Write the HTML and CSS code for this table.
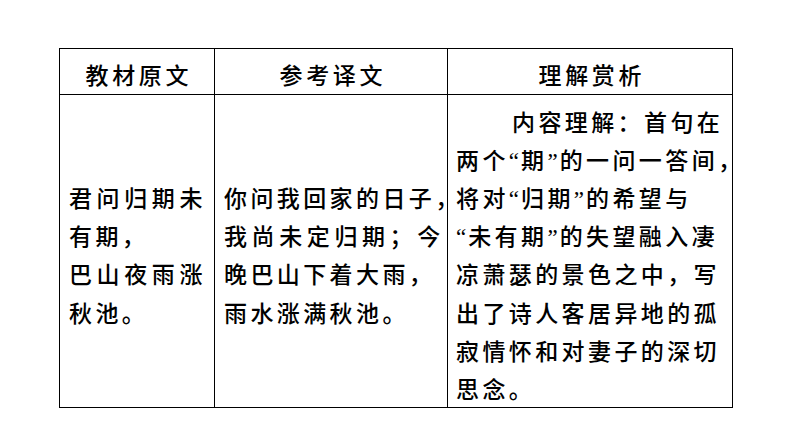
FILE: index.html
```html
<!DOCTYPE html>
<html lang="zh-CN">
<head>
<meta charset="utf-8">
<title>夜雨寄北</title>
<link rel="stylesheet" href="styles.css">
</head>
<body>
<div class="page">
  <div class="grid">
    <div class="cell head">教材原文</div>
    <div class="cell head">参考译文</div>
    <div class="cell head">理解赏析</div>

    <div class="cell body c1">
      <div class="line wide">君问归期未</div>
      <div class="line">有期，</div>
      <div class="line wide">巴山夜雨涨</div>
      <div class="line">秋池。</div>
    </div>
    <div class="cell body c2">
      <div class="line">你问我回家的日子<span class="tight">，</span></div>
      <div class="line wide">我尚未定归期；今</div>
      <div class="line">晚巴山下着大雨，</div>
      <div class="line">雨水涨满秋池。</div>
    </div>
    <div class="cell body c3">
      <div class="line indent">内容理解：首句在</div>
      <div class="line">两个<span class="q">“</span>期<span class="q">”</span>的一问一答间<span class="tight">，</span></div>
      <div class="line">将对<span class="q">“</span>归期<span class="q">”</span>的希望与</div>
      <div class="line"><span class="q">“</span>未有期<span class="q">”</span>的失望融入凄</div>
      <div class="line">凉萧瑟的景色之中，写</div>
      <div class="line">出了诗人客居异地的孤</div>
      <div class="line">寂情怀和对妻子的深切</div>
      <div class="line">思念。</div>
    </div>
  </div>
</div>
</body>
</html>
```

FILE: styles.css
```css
html, body {
  margin: 0;
  padding: 0;
  background: #ffffff;
}

.page {
  padding: 48px 0 0 59px;
  font-family: "Noto Sans CJK SC", "Noto Sans CJK TC", sans-serif;
  font-size: 23px;
  font-weight: 500;
  color: #000000;
}

.grid {
  display: grid;
  grid-template-columns: 155px 233px 285px;
  grid-template-rows: 46px 313px;
  width: 673px;
  border-left: 1px solid #000;
  border-top: 1px solid #000;
}

.cell {
  box-sizing: border-box;
  border-right: 1px solid #000;
  border-bottom: 1px solid #000;
}

.head {
  text-align: center;
  line-height: 45px;
  padding-top: 3px;
  letter-spacing: 3.6px;
  text-indent: 3.6px;
}

.body {
  letter-spacing: 3.4px;
  line-height: 38.2px;
  white-space: nowrap;
}

.c1 {
  padding: 83px 0 0 9px;
}

.c2 {
  padding: 83px 0 0 9px;
}

.c3 {
  padding: 6.6px 0 0 8px;
}

.line {
  height: 38.2px;
}

.wide {
  letter-spacing: 4.6px;
}

.indent {
  text-indent: 56px;
}

.q {
  font-family: "Liberation Serif", serif;
  letter-spacing: 2px;
}

.tight {
  letter-spacing: -13px;
}
```
